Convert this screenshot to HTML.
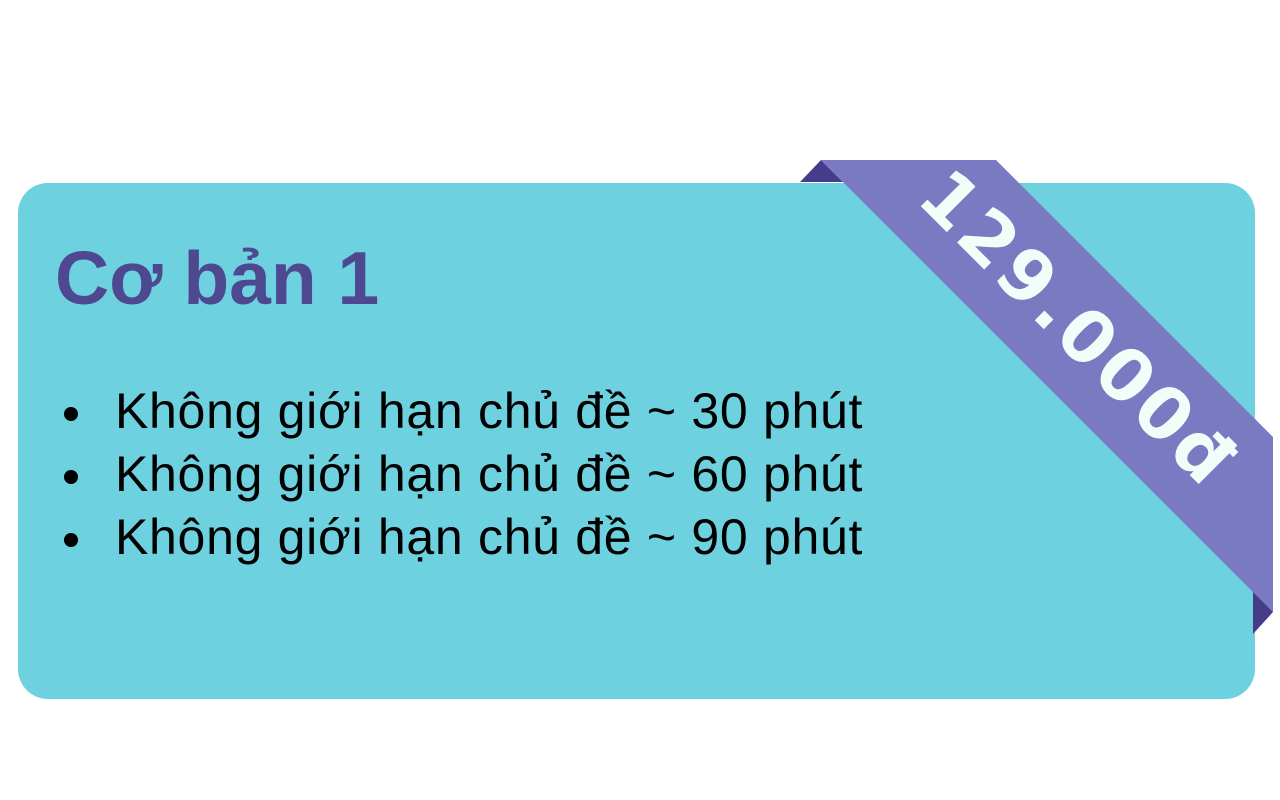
<!DOCTYPE html>
<html><head><meta charset="utf-8"><style>
html,body{margin:0;padding:0;background:#fff;width:1280px;height:800px;overflow:hidden;position:relative;font-family:"Liberation Sans",sans-serif}
.card{position:absolute;left:18px;top:183px;width:1237px;height:516px;background:#6dd1e0;border-radius:30px}
h1{position:absolute;left:55px;top:238px;margin:0;font-size:75px;line-height:80px;font-weight:bold;color:#4e4891;letter-spacing:0px}
ul{position:absolute;left:60px;top:380px;margin:0;padding:0;list-style:none;font-size:50px;letter-spacing:0.7px;color:#000}
li{height:63px;line-height:63px;position:relative;padding-left:55px}
li:before{content:"";position:absolute;left:4px;top:27px;width:14px;height:14px;border-radius:50%;background:#000}
.price{position:absolute;left:1078px;top:328px;transform:translate(-50%,-50%) rotate(45deg);color:#f2fcf8;font-weight:900;font-size:72px;letter-spacing:4px;white-space:nowrap;font-family:"DejaVu Sans","Liberation Sans",sans-serif}
</style></head><body>
<div class="card"></div>
<svg width="1280" height="800" style="position:absolute;left:0;top:0">
<polygon points="800,182 821,160 843,182" fill="#463d8a"/>
<polygon points="1253,590 1273,612 1253,634" fill="#463d8a"/>
<polygon points="821,160 996,160 1273,437 1273,612" fill="#7a7ac3"/>
</svg>
<div class="price">129.000đ</div>
<h1>Cơ bản 1</h1>
<ul>
<li>Không giới hạn chủ đề ~ 30 phút</li>
<li>Không giới hạn chủ đề ~ 60 phút</li>
<li>Không giới hạn chủ đề ~ 90 phút</li>
</ul>
</body></html>
